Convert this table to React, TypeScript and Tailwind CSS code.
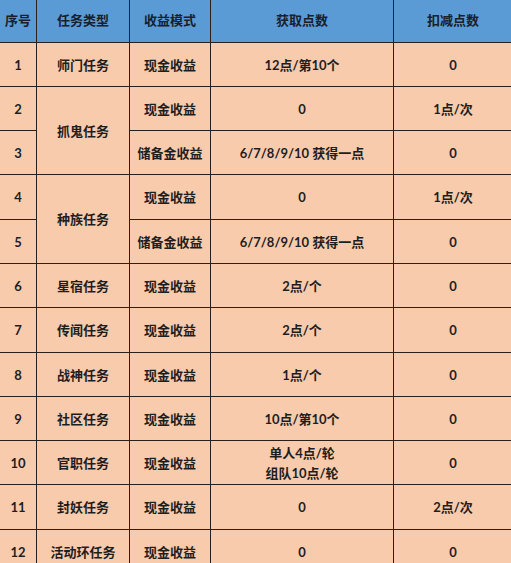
import * as React from "react";

type Row = {
  no: string;
  type?: string;
  span?: number;
  mode: string;
  gain: React.ReactNode;
  cost: string;
};

const rows: Row[] = [
  { no: "1", type: "师门任务", mode: "现金收益", gain: "12点/第10个", cost: "0" },
  { no: "2", type: "抓鬼任务", span: 2, mode: "现金收益", gain: "0", cost: "1点/次" },
  { no: "3", mode: "储备金收益", gain: "6/7/8/9/10 获得一点", cost: "0" },
  { no: "4", type: "种族任务", span: 2, mode: "现金收益", gain: "0", cost: "1点/次" },
  { no: "5", mode: "储备金收益", gain: "6/7/8/9/10 获得一点", cost: "0" },
  { no: "6", type: "星宿任务", mode: "现金收益", gain: "2点/个", cost: "0" },
  { no: "7", type: "传闻任务", mode: "现金收益", gain: "2点/个", cost: "0" },
  { no: "8", type: "战神任务", mode: "现金收益", gain: "1点/个", cost: "0" },
  { no: "9", type: "社区任务", mode: "现金收益", gain: "10点/第10个", cost: "0" },
  {
    no: "10",
    type: "官职任务",
    mode: "现金收益",
    gain: (
      <>
        <span>单人4点/轮</span>
        <span>组队10点/轮</span>
      </>
    ),
    cost: "0",
  },
  { no: "11", type: "封妖任务", mode: "现金收益", gain: "0", cost: "2点/次" },
  { no: "12", type: "活动环任务", mode: "现金收益", gain: "0", cost: "0" },
];

const headers = ["序号", "任务类型", "收益模式", "获取点数", "扣减点数"];

function Cell({ children, className = "" }: { children: React.ReactNode; className?: string }) {
  return (
    <div className={`flex flex-col items-center justify-center text-center bg-[#f8cbad] leading-[20px] ${className}`}>
      {children}
    </div>
  );
}

export default function App() {
  return (
    <div className="w-[511px] h-[563px] overflow-hidden bg-[#f8cbad]">
      <div
        className="grid w-[512px] grid-cols-[36px_92px_80px_182px_118px] grid-rows-[42px_43px_43px_43px_44px_43px_43px_44px_43px_43px_43px_44px_43px] gap-px bg-[#2a1f19] text-[13px] font-bold text-[#1e1e1e]"
        style={{ fontFamily: 'Lato, "Noto Sans CJK SC", sans-serif' }}
      >
        {headers.map((h) => (
          <div key={h} className="flex items-center justify-center bg-[#5b9bd5] text-[#18202c]">
            {h}
          </div>
        ))}
        {rows.map((r) => (
          <React.Fragment key={r.no}>
            <Cell>{r.no}</Cell>
            {r.type && <Cell className={r.span === 2 ? "row-span-2" : ""}>{r.type}</Cell>}
            <Cell>{r.mode}</Cell>
            <Cell>{r.gain}</Cell>
            <Cell>{r.cost}</Cell>
          </React.Fragment>
        ))}
      </div>
    </div>
  );
}
